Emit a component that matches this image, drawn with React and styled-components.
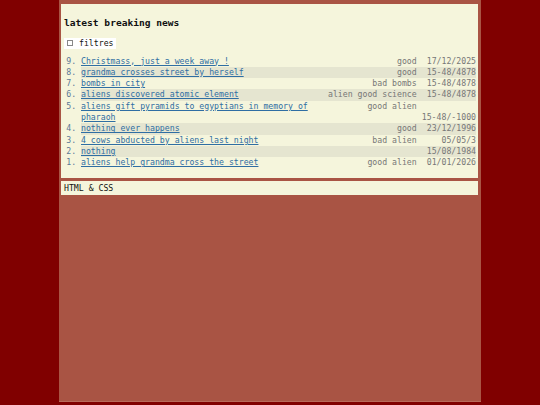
import styled, { createGlobalStyle } from "styled-components";

const GlobalStyle = createGlobalStyle`
  html, body {
    margin: 0;
    padding: 0;
    background: #800000;
    font-family: "DejaVu Sans Mono", "Liberation Mono", monospace;
    font-size: 8.2px;
  }
`;

const Column = styled.div`
  width: 422px;
  min-height: 402px;
  margin: 0 auto;
  padding: 4px 3px 0 2px;
  box-sizing: border-box;
  background: #a95444;
  border-bottom: 1px solid #b86a5a;
  display: flex;
  flex-direction: column;
  gap: 3px;
`;

const Panel = styled.main`
  background: #f5f5dc;
  padding: 2px 2px 10px 3px;
  color: #111;
`;

const Title = styled.h3`
  font-size: 1.17em;
  font-weight: bold;
  margin: 11px 0 9px;
  line-height: 1.2;
`;

const Filter = styled.label`
  display: inline-flex;
  align-items: center;
  gap: 6px;
  background: #fff;
  padding: 1px 2px;
  margin-bottom: 7px;
  line-height: 1.1;
`;

const Box = styled.span`
  width: 4px;
  height: 4px;
  border: 1px solid #888;
  background: #fff;
  margin-left: 1px;
`;

const List = styled.ol`
  margin: 0;
  padding-left: 17px;
  color: #5b7896;
  line-height: 11.3px;
`;

const Item = styled.li`
  background: ${(p) => (p.$shade ? "#e5e5d0" : "transparent")};
`;

const Row = styled.div`
  display: grid;
  grid-template-columns: 60% 1fr 10ch;
  column-gap: 10px;
`;

const Headline = styled.a`
  grid-row: ${(p) => (p.$tall ? "span 2" : "auto")};
  color: #2f6ea3;
  text-decoration: underline;
`;

const Tag = styled.span`
  color: #777;
  text-align: right;
  white-space: nowrap;
`;

const Date = styled.span`
  color: #777;
  text-align: right;
  white-space: nowrap;
  grid-column: ${(p) => (p.$late ? "2 / 4" : "auto")};
  grid-row: ${(p) => (p.$late ? "2" : "auto")};
`;

const Footer = styled.footer`
  background: #f5f5dc;
  padding: 2px 3px 0;
  line-height: 11.5px;
  color: #111;
`;

const news = [
  { n: 9, title: "Christmass, just a week away !", tag: "good", date: "17/12/2025" },
  { n: 8, title: "grandma crosses street by herself", tag: "good", date: "15-48/4878" },
  { n: 7, title: "bombs in city", tag: "bad bombs", date: "15-48/4878" },
  { n: 6, title: "aliens discovered atomic element", tag: "alien good science", date: "15-48/4878" },
  { n: 5, title: "aliens gift pyramids to egyptians in memory of pharaoh", tag: "good alien", date: "15-48/-1000", long: true },
  { n: 4, title: "nothing ever happens", tag: "good", date: "23/12/1996" },
  { n: 3, title: "4 cows abducted by aliens last night", tag: "bad alien", date: "05/05/3" },
  { n: 2, title: "nothing", tag: "", date: "15/08/1984" },
  { n: 1, title: "aliens help grandma cross the street", tag: "good alien", date: "01/01/2026" },
];

export default function App() {
  return (
    <>
      <GlobalStyle />
      <Column>
        <Panel>
          <Title>latest breaking news</Title>
          <Filter>
            <Box />
            filtres
          </Filter>
          <List reversed>
            {news.map((item) => (
              <Item key={item.n} $shade={item.n % 2 === 0}>
                <Row>
                  <Headline href="#" $tall={item.long}>
                    {item.title}
                  </Headline>
                  <Tag>{item.tag}</Tag>
                  <Date $late={item.long}>{item.date}</Date>
                </Row>
              </Item>
            ))}
          </List>
        </Panel>
        <Footer>HTML &amp; CSS</Footer>
      </Column>
    </>
  );
}
